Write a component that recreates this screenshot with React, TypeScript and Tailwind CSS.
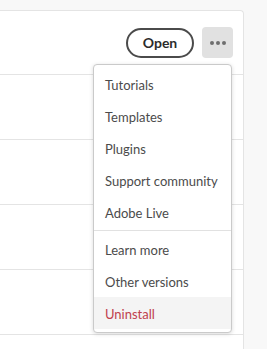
import React from "react";

const items = ["Tutorials", "Templates", "Plugins", "Support community", "Adobe Live"];
const more = ["Learn more", "Other versions"];

export default function App() {
  return (
    <div
      className="relative w-[267px] h-[349px] overflow-hidden bg-[#f8f8f8] pt-[10px] pr-[23px]"
      style={{ fontFamily: "Lato, 'Noto Sans', sans-serif" }}
    >
      <div className="bg-white border-t border-r border-[#e4e4e4] rounded-tr-[4px]">
        {/* top row with actions */}
        <div className="h-[64px] flex items-center justify-end gap-[8px] pr-[10px] border-b border-[#e4e4e4]">
          <button className="h-[30px] w-[68px] rounded-full border-2 border-[#4b4b4b] text-[14px] font-bold text-[#2c2c2c] flex items-center justify-center">
            Open
          </button>
          <button className="h-[31px] w-[31px] rounded-[4px] bg-[#e1e1e1] flex items-center justify-center gap-[2px]">
            <span className="w-[4px] h-[4px] rounded-full bg-[#6e6e6e]" />
            <span className="w-[4px] h-[4px] rounded-full bg-[#6e6e6e]" />
            <span className="w-[4px] h-[4px] rounded-full bg-[#6e6e6e]" />
          </button>
        </div>
        <div className="h-[65px] border-b border-[#e4e4e4]" />
        <div className="h-[65px] border-b border-[#e4e4e4]" />
        <div className="h-[65px] border-b border-[#e4e4e4]" />
        <div className="h-[65px] border-b border-[#e4e4e4]" />
        <div className="h-[65px]" />
      </div>

      {/* dropdown menu */}
      <div className="absolute left-[93px] top-[64px] w-[139px] bg-white border border-[#cacaca] rounded-[4px] shadow-[0_1px_4px_rgba(0,0,0,0.15)] py-[3px]">
        {items.map((t) => (
          <div key={t} className="h-[32px] flex items-center px-[11px] pt-[3px] text-[13px] text-[#4b4b4b] whitespace-nowrap">
            {t}
          </div>
        ))}
        <div className="my-[2px] h-px bg-[#e1e1e1]" />
        {more.map((t) => (
          <div key={t} className="h-[32px] flex items-center px-[11px] pt-[3px] text-[13px] text-[#4b4b4b] whitespace-nowrap">
            {t}
          </div>
        ))}
        <div className="h-[32px] flex items-center px-[11px] pt-[3px] text-[13px] text-[#c0414d] bg-[#f4f4f4]">
          Uninstall
        </div>
      </div>
    </div>
  );
}
